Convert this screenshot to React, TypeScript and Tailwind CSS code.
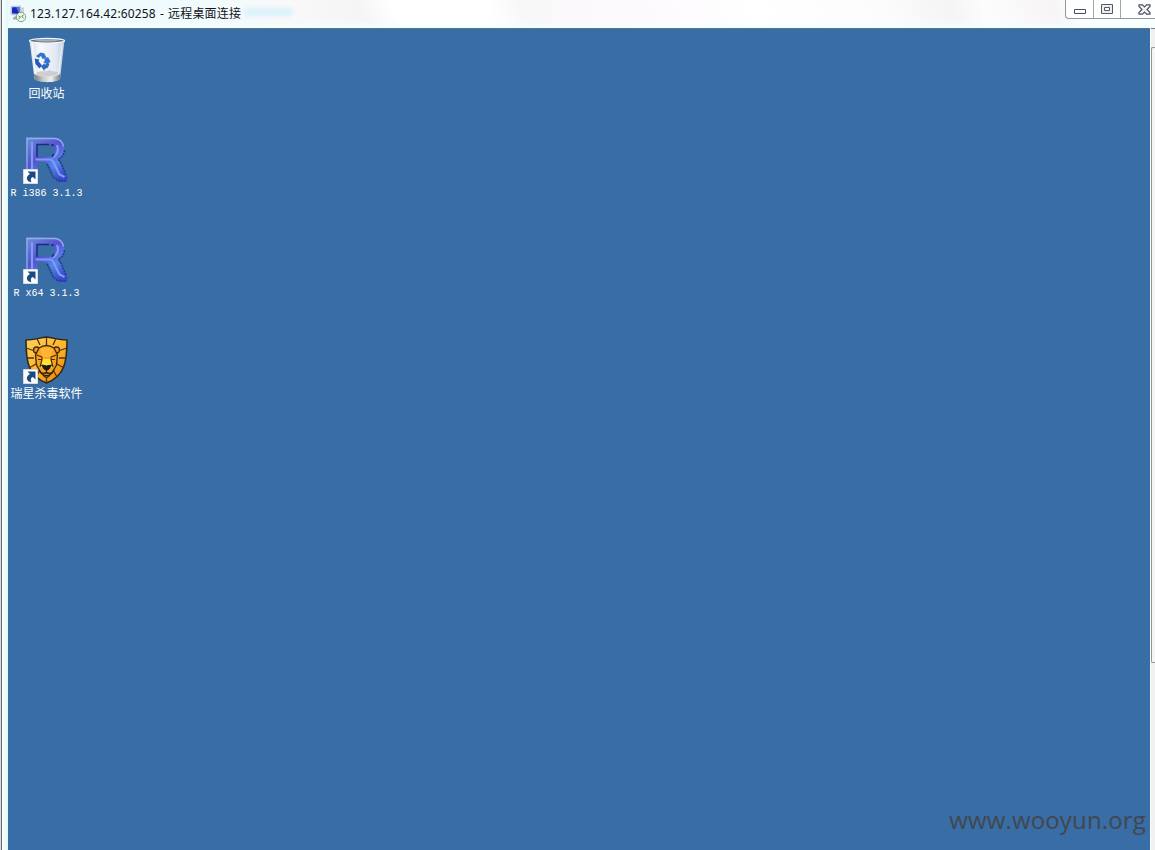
import type { ReactNode } from 'react';

function RemoteIcon() {
  return (
    <svg width="18" height="18" viewBox="0 0 18 18" className="shrink-0">
      <path d="M1 1.5 10.5 1v9.5L1 9.5z" fill="#dce0e6" stroke="#b4bac3" strokeWidth=".8" />
      <path d="M2 2.300 9.500 2v7L2 8.500z" fill="#1428c4" />
      <path d="M6 2.200 9.500 2v7z" fill="#5278df" />
      <path d="M11 2.500h3v6h-3z" fill="#ced2d8" />
      <path d="M3 12.500 7 10.500l3 2v2H3z" fill="#a5a9b0" />
      <circle cx="11" cy="12" r="4.700" fill="#eef6ea" stroke="#7c957d" strokeWidth=".9" />
      <path d="m8.500 10.800 1.900 1.400-1.900 1.800M13.600 9.900l-1.900 1.500 1.900 1.700" fill="none" stroke="#3c8a40" strokeWidth="1" />
    </svg>
  );
}

function RecycleBin() {
  return (
    <svg width="48" height="48" viewBox="0 0 48 48">
      <defs>
        <linearGradient id="glass" x1="0" x2="1">
          <stop offset="0" stopColor="#d3dce8" />
          <stop offset=".3" stopColor="#f6f8fb" />
          <stop offset=".75" stopColor="#e3eaf3" />
          <stop offset="1" stopColor="#b8c8da" />
        </linearGradient>
        <linearGradient id="base" x1="0" x2="1">
          <stop offset="0" stopColor="#777b80" />
          <stop offset=".35" stopColor="#c9c9c9" />
          <stop offset=".65" stopColor="#eee" />
          <stop offset="1" stopColor="#76797d" />
        </linearGradient>
      </defs>
      <path d="M6.500 4.500h35L37 43c-4 3.500-21.500 3.500-25.500 0z" fill="url(#glass)" />
      <path d="M11 38c6 3.500 21 3.500 26.500 0l-.8 5c-3 4.200-21.500 4.200-25 0z" fill="url(#base)" />
      <path d="M12 38c5-5 10-1 14-4 3 2 7 1 11 3-5 4-20 5-25 1z" fill="#c4c5c8" opacity=".8" />
      <ellipse cx="24" cy="4.800" rx="17.500" ry="2.300" fill="#68717e" stroke="#f1f4f8" strokeWidth="1.300" />
      <path d="M11 4.500c6-1.500 19-1.500 26 0-7 1.600-20 1.600-26 0z" fill="#a4afc0" />
      <g fill="#3474cf">
        <path d="m13 20 4.500-3.500 4 1 2 4.500-4 1-1.500-3-2.500 2z" />
        <path d="m21 23 4-2 2.500 4.500-3 3-4.500-2.500 2-1z" />
        <path d="m11.500 22.500 5 1-1 1.500 3.500 4.500-2.500 3-4-4.500z" fill="#245db5" />
        <path d="m18 30.500 3.500-3.500v1.500l5-1-1.500 4-3.500 1.700v2z" fill="#2f68bd" />
      </g>
      <path d="m9 7 3.500 31" stroke="#fff" strokeWidth="1.300" opacity=".8" />
      <path d="M39 8 35.500 38" stroke="#fff" strokeWidth="1" opacity=".7" />
    </svg>
  );
}

function ShortcutArrow() {
  return (
    <svg width="15" height="15" viewBox="0 0 15 15" className="absolute bottom-0 left-0">
      <path d="M.5.500h14v14H.5z" fill="#fff" stroke="#d6dbe0" />
      <path d="M4.500 2.500h8v8l-2.600-2.500C8 8.500 7.100 10.200 8.400 13.200 3 12.500 2.300 7.500 7 5z" fill="#1b4a80" />
    </svg>
  );
}

function RLogo() {
  return (
    <svg width="48" height="48" viewBox="0 0 48 48">
      <defs>
        <linearGradient id="rFill" x1="0" y1="0" x2=".7" y2="1">
          <stop offset="0" stopColor="#6c91dc" />
          <stop offset=".45" stopColor="#5551cf" />
          <stop offset=".72" stopColor="#5785ef" />
          <stop offset="1" stopColor="#3549cb" />
        </linearGradient>
      </defs>
      <path fillRule="evenodd" d="M3 1.500h29c6 .5 9.500 5 9.500 11 0 5.500-3 9-7.500 10.500l3 4 6 13 2 1-1.500 5h-7l-3.500-3-6.500-14-3-3h-9.500V45H3zM14 9v11.500h12c4 0 6-2 6-5.500s-2-6-5-6z" fill="url(#rFill)" />
      <path d="M4 42V2.500h28c4.500.5 7.500 3 8.500 8" fill="none" stroke="#8faee5" strokeWidth="1.300" />
      <path d="M9 40V6M12.500 23.500h15c3 1 4 4 5 7l4 8 5 2.500M34 9c2 5 .5 10-5 13" fill="none" stroke="#7e9cf3" strokeWidth="2.200" />
      <path d="M14 21V8.500h12M28 9h3M31 18l-2 3" fill="none" stroke="#182d7d" strokeWidth="1.500" />
      <path d="M41.500 14c-.5 4-2 7-6 9l2.500 4 5 12M24 28l6 13 5 4h8" fill="none" stroke="#263990" strokeWidth="1.500" strokeDasharray="2 1" />
    </svg>
  );
}

function LionShield() {
  return (
    <svg width="48" height="48" viewBox="0 0 48 48" strokeLinejoin="round">
      <defs>
        <linearGradient id="mane" x1="0" y1="0" x2=".8" y2="1">
          <stop offset="0" stopColor="#ffd158" />
          <stop offset=".55" stopColor="#feb62a" />
          <stop offset="1" stopColor="#ed8508" />
        </linearGradient>
      </defs>
      <path d="M3 4C10 4 16 2 23.500 1c7.500 1 13 3 20.500 3C44 25 42 40 23.500 47 5 40 3 25 3 4z" fill="url(#mane)" stroke="#2c251a" strokeWidth="1.500" />
      <path d="M14 2.500 17 9M23.500 1v8M33 2.500 30 9M3 12l9 3M4 22h7M44 12l-9 3M43 22h-7M6 32l7-4M41 32l-7-4M13 41l4-7M34 41l-4-7M23.500 43v4" stroke="#4a3414" strokeWidth="1.300" />
      <circle cx="13.500" cy="14" r="3" fill="#f69a20" stroke="#402a11" strokeWidth="1.300" />
      <circle cx="33.500" cy="14" r="3" fill="#f69a20" stroke="#402a11" strokeWidth="1.300" />
      <path d="M16 12q7.500-5 15 0l3.500 7-1 10-4.500 8-5.500 5-5.500-5-4.500-8-1-10z" fill="#fca31d" stroke="#402a11" strokeWidth="1.400" />
      <path d="m17 13 6.500-2 6.500 2-2.500 8h-8z" fill="#ffb635" />
      <path d="m19 21-2 10 6.500 2 6.500-2-2-10-2 2h-5z" fill="#ffdf38" />
      <path d="m13.500 19 5.500 2v2.500h-4M33.500 19 28 21v2.500h4M19 23.500 17 31M28 23.500l2 7.500" fill="none" stroke="#4c2c0c" strokeWidth="1.200" />
      <path d="m18.500 29 5 1 5-1-2.500 4-2.500 1.500L21 33zM23.500 33v4" fill="#1c1917" stroke="#1c1917" />
      <path d="M16 34c2 4 5 4 7.500 2.500C26 38 29 38 31 34M20 39.500h7" fill="none" stroke="#38230e" strokeWidth="1.500" />
    </svg>
  );
}

function DesktopItem({ label, children, shortcut = false, latin = false }: { label: string; children: ReactNode; shortcut?: boolean; latin?: boolean }) {
  return (
    <div className="flex h-[100px] w-[77px] flex-col items-center">
      <div className="relative h-12 w-12">
        {children}
        {shortcut && <ShortcutArrow />}
      </div>
      <span className={latin ? "mt-[3px] whitespace-nowrap font-['Liberation_Mono',monospace] text-[10px] leading-[14px] text-white" : "mt-[2px] whitespace-nowrap font-['Noto_Sans_CJK_SC',sans-serif] text-[12px] leading-[14px] text-white"}>
        {label}
      </span>
    </div>
  );
}

function WindowControls() {
  return (
    <div className="flex h-[19px] w-[90px] shrink-0 rounded-bl-[4px] border-b border-l border-[#929699] bg-white/80">
      <div className="flex w-[28px] items-center justify-center border-r border-[#a3a6a9]">
        <svg width="14" height="12" viewBox="0 0 14 12" className="mt-[2px]">
          <path d="M1.500 5.500h11v4h-11z" fill="#fff" stroke="#4b505f" />
        </svg>
      </div>
      <div className="flex w-[27px] items-center justify-center border-r border-[#a3a6a9]">
        <svg width="12" height="10" viewBox="0 0 12 10">
          <path d="M.5.500h11v9H.5z" fill="#ededf0" stroke="#555966" />
          <path d="M3.500 3.500h5v3h-5z" fill="#fff" stroke="#555966" />
        </svg>
      </div>
      <div className="flex flex-1 items-center pl-[17px]">
        <svg width="13" height="11" viewBox="0 0 13 11" className="shrink-0">
          <path d="M1 .800h3.500l2 2 2-2H12v1.700L9 5.500l3 3v1.700H8.500l-2-2-2 2H1V8.500l3-3-3-3z" fill="#f4f4f6" stroke="#4f5362" strokeWidth="1.200" />
        </svg>
      </div>
    </div>
  );
}

export default function App() {
  return (
    <div className="flex h-[850px] w-[1155px] overflow-hidden bg-[#effcfd] font-['Noto_Sans','Noto_Sans_CJK_SC',sans-serif]">
      <div className="flex w-2 shrink-0 border-l border-[#d7dcdf]">
        <div className="w-px bg-[#62686c]" />
        <div className="flex-1 bg-gradient-to-r from-white to-[#ddf8fb]" />
      </div>
      <div className="flex min-w-0 flex-1 flex-col">
        <header className="flex h-7 shrink-0 items-start bg-[linear-gradient(to_top,#f3ffff_0px,#f3ffff00_7px),linear-gradient(70deg,#edfafc_0%,#f0fbfd_17%,#faf9fa_25%,#f6f5f6_31%,#ffffff_34%,#ffffff_42%,#f9f8f9_45%,#fdfafd_56%,#ffffff_65%,#fdfcfd_76%,#f6f5f6_82%,#fdfcfd_85%,#f7f5f6_91%,#fbffff_93%)]">
          <div className="flex h-7 flex-1 items-center">
            <div className="flex w-[22px] justify-center"><RemoteIcon /></div>
            <span className="w-[130px] whitespace-nowrap text-[12px] leading-4 tracking-[0.16px] text-[#111318]">123.127.164.42:60258</span>
            <span className="w-[8px] text-[12px] leading-4 text-[#111318]">-</span>
            <span className="whitespace-nowrap text-[12px] leading-4 tracking-[0.2px] text-[#111318]">远程桌面连接</span>
            <div className="mb-1 ml-1 h-2 w-12 bg-[#d9f2fb] blur-[2px]" />
          </div>
          <WindowControls />
        </header>
        <div className="flex min-h-0 flex-1">
          <main className="flex w-[1142px] flex-col justify-between border-t border-[#557589] bg-[#396da5]">
            <div className="pt-[7px]">
              <DesktopItem label="回收站"><RecycleBin /></DesktopItem>
              <DesktopItem label="R i386 3.1.3" shortcut latin><RLogo /></DesktopItem>
              <DesktopItem label="R x64 3.1.3" shortcut latin><RLogo /></DesktopItem>
              <DesktopItem label="瑞星杀毒软件" shortcut><LionShield /></DesktopItem>
            </div>
            <div className="flex h-[46px] justify-end pr-[4px]">
              <span className="font-['Open_Sans',sans-serif] text-[24px] leading-8 tracking-[0.16px] text-[#41474e]">www.wooyun.org</span>
            </div>
          </main>
          <div className="w-px bg-white" />
          <div className="flex flex-1 flex-col bg-[#f0f0f0]">
            <div className="h-[19px] border-t border-[#788188]" />
            <div className="h-[616px] rounded-l-[2px] border-y border-l border-[#969696] bg-[#f5f5f5]" />
          </div>
        </div>
      </div>
    </div>
  );
}
